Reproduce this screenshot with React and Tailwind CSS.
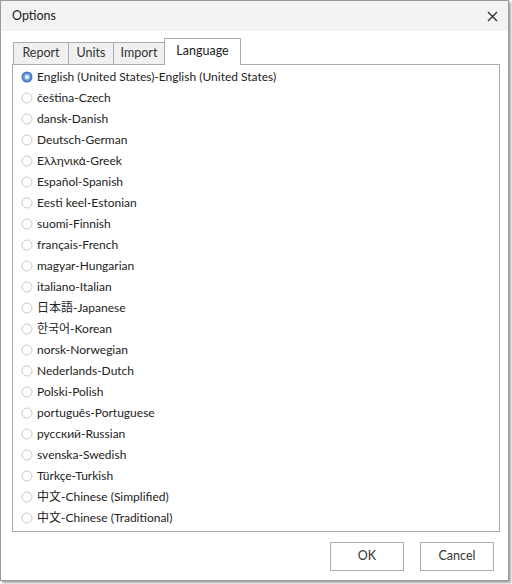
import React, { useState } from 'react';

const languages = [
  'English (United States)-English (United States)',
  'čeština-Czech',
  'dansk-Danish',
  'Deutsch-German',
  'Ελληνικά-Greek',
  'Español-Spanish',
  'Eesti keel-Estonian',
  'suomi-Finnish',
  'français-French',
  'magyar-Hungarian',
  'italiano-Italian',
  '日本語-Japanese',
  '한국어-Korean',
  'norsk-Norwegian',
  'Nederlands-Dutch',
  'Polski-Polish',
  'português-Portuguese',
  'русский-Russian',
  'svenska-Swedish',
  'Türkçe-Turkish',
  '中文-Chinese (Simplified)',
  '中文-Chinese (Traditional)',
];

const tabs = [
  { label: 'Report', w: 'w-[55px]' },
  { label: 'Units', w: 'w-[45px]' },
  { label: 'Import', w: 'w-[51px]' },
  { label: 'Language', w: 'w-[77px]' },
];

const Radio = ({ checked }) => (
  <svg width="12" height="12" viewBox="0 0 12 12" className="shrink-0">
    {checked ? (
      <>
        <circle cx="6" cy="6" r="5.5" fill="#3f74c4" />
        <circle cx="6" cy="6" r="4" fill="#6d9be0" />
        <circle cx="6" cy="6" r="2.2" fill="#eef4fc" />
      </>
    ) : (
      <circle cx="6" cy="6" r="5" fill="#fff" stroke="#c9c9c9" strokeWidth="1" />
    )}
  </svg>
);

export default function App() {
  const [selected, setSelected] = useState(0);
  const font = { fontFamily: 'Lato, "Noto Sans CJK JP", "Noto Sans CJK KR", sans-serif' };

  return (
    <div className="w-[512px] h-[584px] bg-white" style={font}>
      <div className="w-[509px] h-[581px] border border-[#9a9a9a] bg-white flex flex-col shadow-[2px_2px_2px_rgba(0,0,0,0.35)]">
        <div className="h-[30px] shrink-0 bg-[#f3f3f3] flex items-center justify-between pl-[11px] pr-[10px] text-[12.5px] text-[#222]">
          <span>Options</span>
          <svg width="11" height="11" viewBox="0 0 11 11">
            <path d="M1 1L10 10M10 1L1 10" stroke="#333" strokeWidth="1.4" />
          </svg>
        </div>

        <div className="flex-1 flex flex-col pl-[11px] pr-[8px] pt-[6px]">
          <div className="flex items-end h-[27px] shrink-0 pl-[1px] relative z-10">
            {tabs.map((t, i) => {
              const active = i === 3;
              return (
                <div
                  key={t.label}
                  className={
                    active
                      ? `${t.w} h-[27px] bg-white border border-b-0 border-[#acacac] text-[12.5px] text-[#222] flex justify-center items-start pt-[3px] -mb-px`
                      : `${t.w} h-[22px] bg-[#f0f0f0] border border-r-0 border-b-0 border-[#acacac] text-[12.5px] text-[#333] flex justify-center items-center`
                  }
                >
                  {t.label}
                </div>
              );
            })}
          </div>
          <div className="h-[468px] shrink-0 border border-[#acacac] bg-white flex flex-col pt-[1px] pl-[8px]">
            {languages.map((l, i) => (
              <div
                key={l}
                onClick={() => setSelected(i)}
                className="h-[21px] shrink-0 flex items-center gap-[4px] text-[12px] text-[#222] cursor-default"
              >
                <Radio checked={i === selected} />
                <span className="whitespace-nowrap">{l}</span>
              </div>
            ))}
          </div>
          <div className="flex justify-end gap-[16px] pt-[10px] pr-[6px]">
            <button className="w-[74px] h-[29px] border border-[#adadad] bg-white text-[12.5px] text-[#333]">OK</button>
            <button className="w-[74px] h-[29px] border border-[#adadad] bg-white text-[12.5px] text-[#333]">Cancel</button>
          </div>
        </div>
      </div>
    </div>
  );
}
